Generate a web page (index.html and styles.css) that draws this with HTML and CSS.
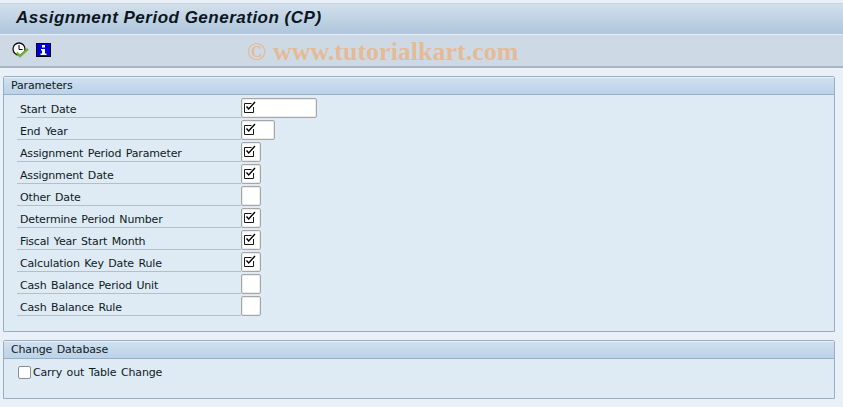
FILE: index.html
```html
<!DOCTYPE html>
<html>
  <head>
    <meta http-equiv="Content-Type" content="text/html; charset=UTF-8">
    <title>Assignment Period Generation (CP)</title>
    <link rel="stylesheet" href="styles.css">
  </head>
  <body>
    <svg class="defs" width="0" height="0">
      <symbol id="tick" viewBox="0 0 13 13">
        <path d="M9.500 6V11.500H0.500V2.500H7.500" fill="none" stroke="#1a1a1a" stroke-width="1"/>
        <path d="M2.500 5.500L4.700 8L11 1" fill="none" stroke="#000" stroke-width="1.400"/>
      </symbol>
    </svg>
    <div class="titlebar"><h1>Assignment Period Generation (CP)</h1></div>
    <div class="toolbar">
      <svg class="icon" width="18" height="16" viewBox="0 0 18 16">
        <circle cx="7" cy="7" r="6" fill="#fff" stroke="#111" stroke-width="1.300"/>
        <path d="M7 3V7.500H10.500" fill="none" stroke="#000" stroke-width="1"/>
        <path d="M4.700 10.700L8 14L16 6.800" fill="none" stroke="#6fb03a" stroke-width="2.400"/>
      </svg>
      <svg class="icon icon-info" width="15" height="14" viewBox="0 0 15 14">
        <rect x="0" y="0" width="15" height="14" fill="#0000d8"/>
        <rect x="0.500" y="0.500" width="14" height="13" fill="none" stroke="#000016" stroke-width="1"/>
        <path d="M6 2H9V4.500H6ZM5 6H9V10.500H10.500V12H4.500V10.500H6V7.500H5Z" fill="#fff"/>
      </svg>
      <span class="watermark">© www.tutorialkart.com</span>
    </div>

    <section class="group group-params">
      <div class="group-head">Parameters</div>
      <div class="rows">
        <div class="row"><label>Start Date</label><span class="field w-long"><svg class="req"><use href="#tick"/></svg></span></div>
        <div class="row"><label>End Year</label><span class="field w-mid"><svg class="req"><use href="#tick"/></svg></span></div>
        <div class="row"><label>Assignment Period Parameter</label><span class="field"><svg class="req"><use href="#tick"/></svg></span></div>
        <div class="row"><label>Assignment Date</label><span class="field"><svg class="req"><use href="#tick"/></svg></span></div>
        <div class="row"><label>Other Date</label><span class="field"></span></div>
        <div class="row"><label>Determine Period Number</label><span class="field"><svg class="req"><use href="#tick"/></svg></span></div>
        <div class="row"><label>Fiscal Year Start Month</label><span class="field"><svg class="req"><use href="#tick"/></svg></span></div>
        <div class="row"><label>Calculation Key Date Rule</label><span class="field"><svg class="req"><use href="#tick"/></svg></span></div>
        <div class="row"><label>Cash Balance Period Unit</label><span class="field"></span></div>
        <div class="row"><label>Cash Balance Rule</label><span class="field"></span></div>
      </div>
    </section>

    <section class="group group-change">
      <div class="group-head">Change Database</div>
      <div class="check-row"><span class="checkbox"></span><label>Carry out Table Change</label></div>
    </section>
  </body>
</html>
```

FILE: styles.css
```css
html, body {
  margin: 0;
  padding: 0;
}
body {
  width: 843px;
  height: 407px;
  overflow: hidden;
  background-color: #e9f0f8;
  font-family: "DejaVu Sans", sans-serif;
  font-size: 11px;
  letter-spacing: -0.15px;
  word-spacing: 1.2px;
  color: #0e1a24;
}
.defs {
  display: block;
}
.titlebar {
  box-sizing: border-box;
  height: 32px;
  margin-top: 3px;
  padding-left: 16px;
  background: linear-gradient(#d3e0ec, #aec5dc);
  border-top: 1px solid #c8d3dc;
  border-bottom: 1px solid #e6eef5;
}
.titlebar h1 {
  margin: 0;
  font-family: "Liberation Sans", sans-serif;
  font-size: 17px;
  font-weight: bold;
  font-style: italic;
  line-height: 27px;
  color: #0c1620;
  letter-spacing: 0.5px;
  word-spacing: 0;
}
.toolbar {
  position: relative;
  box-sizing: border-box;
  height: 33px;
  display: flex;
  align-items: flex-start;
  gap: 6px;
  padding: 7px 0 0 12px;
  background-color: #cddae6;
  border-bottom: 2px solid #a9b6c2;
}
.icon {
  display: block;
}
.icon-info {
  margin-top: 1px;
}
.watermark {
  position: absolute;
  left: 247px;
  top: 2px;
  font-family: "Liberation Serif", serif;
  font-size: 26px;
  font-weight: bold;
  letter-spacing: 0;
  word-spacing: 0;
  color: #e5bb96;
  white-space: nowrap;
}
.group {
  box-sizing: border-box;
  width: 832px;
  margin-left: 3px;
  background-color: #deeaf4;
  border: 1px solid #95afc9;
  border-radius: 2px 2px 0 0;
}
.group-params {
  height: 256px;
  margin-top: 8px;
}
.group-change {
  height: 59px;
  margin-top: 8px;
}
.group-head {
  box-sizing: border-box;
  height: 18px;
  padding-left: 7px;
  line-height: 16px;
  background: linear-gradient(#cfe0f0, #bcd2e8);
  border-top: 1px solid #e6f0f8;
  border-bottom: 1px solid #95afc9;
}
.rows {
  padding: 1px 0 0 13px;
}
.row {
  display: flex;
  box-sizing: border-box;
  width: 224px;
  height: 22px;
  border-bottom: 1px solid #b4bfc8;
}
.row label {
  box-sizing: border-box;
  width: 224px;
  flex: none;
  padding: 1px 0 0 3px;
  line-height: 26px;
}
.field {
  flex: none;
  box-sizing: border-box;
  width: 20px;
  height: 20px;
  margin-top: 2px;
  background-color: #fff;
  border: 1px solid #a6a6a6;
  border-radius: 2px;
  box-shadow: inset 0 0 0 1px #ececec;
}
.w-long {
  width: 76px;
}
.w-mid {
  width: 34px;
}
.req {
  display: block;
  width: 13px;
  height: 13px;
  margin: 2px 0 0 2px;
}
.check-row {
  display: flex;
  align-items: center;
  gap: 2px;
  padding: 7px 0 0 14px;
}
.checkbox {
  box-sizing: border-box;
  width: 13px;
  height: 13px;
  background-color: #fff;
  border: 1px solid #8a8f94;
  border-radius: 2px;
}
```
